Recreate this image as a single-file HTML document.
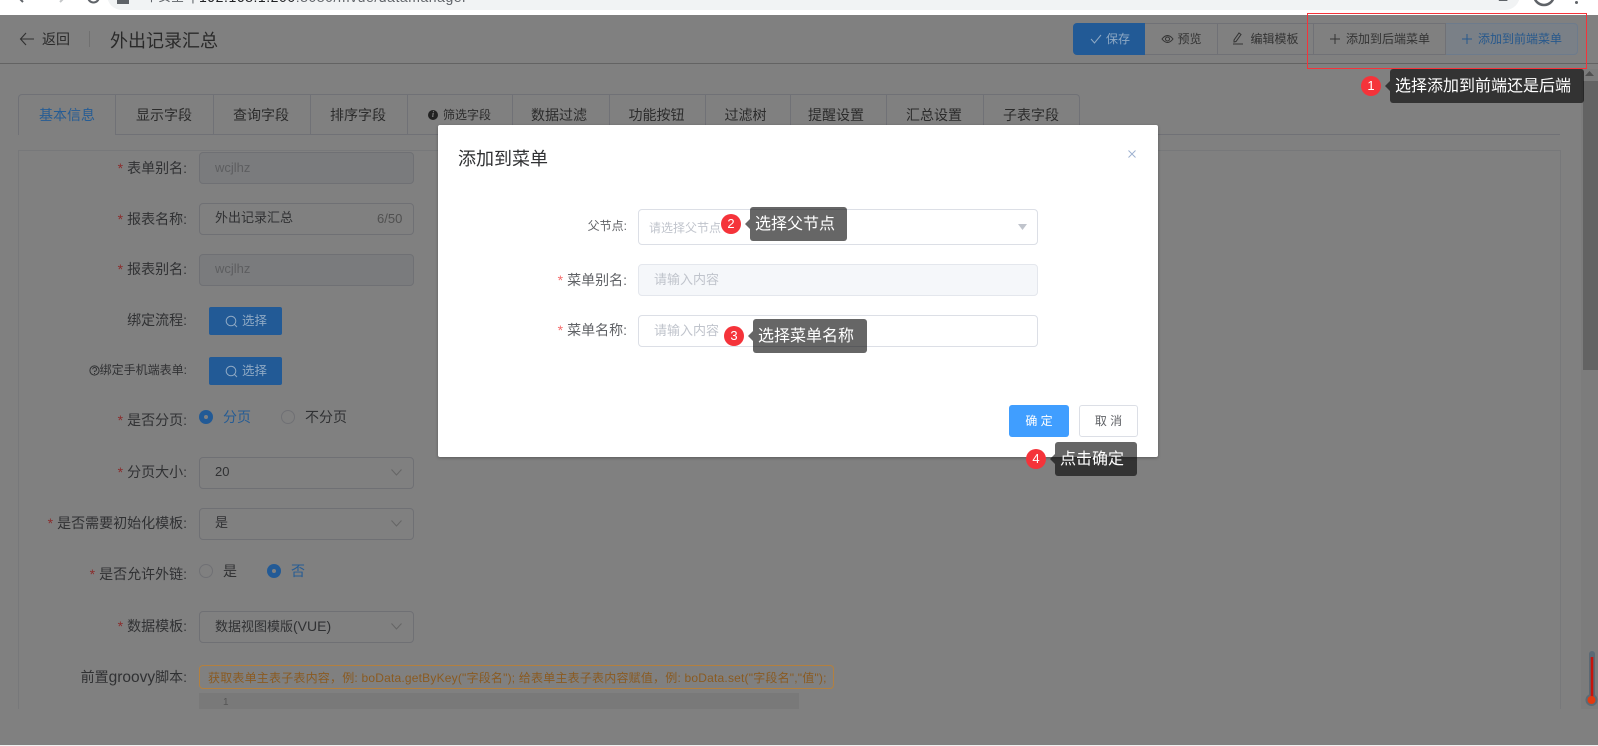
<!DOCTYPE html>
<html lang="zh-CN"><head><meta charset="utf-8"><title>添加到菜单</title>
<style>
html,body{margin:0;padding:0;background:#fff}
body{width:1598px;height:746px;position:relative;overflow:hidden;font-family:"Liberation Sans","Noto Sans CJK SC",sans-serif;font-size:14px;color:#303133}
div,span{box-sizing:border-box}
.a{position:absolute}
.t{position:absolute;white-space:nowrap;height:20px;line-height:20px}
.l{position:absolute;white-space:nowrap;right:1411px;height:20px;line-height:20px;color:#303133;font-size:14px}
.l i,.ml i{font-style:normal;color:#8a2c2c;margin-right:4px}
.b{position:absolute;border:1px solid #6f7074;border-radius:4px;left:199px;width:215px}
.dis{background:#7a7b7d}
.tab{position:absolute;top:94px;height:41px;border-right:1px solid #707176;line-height:43px;text-align:center;color:#2b2b2b;font-size:14px;white-space:nowrap}
.tb{position:absolute;top:23px;height:32px;border:1px solid #707176;border-left:0;line-height:30px;text-align:center;font-size:12px;color:#333;white-space:nowrap}
.tip{position:absolute;background:rgba(0,0,0,.6);border-radius:3px;color:#fff;font-size:16px;height:34px;line-height:36px;white-space:nowrap;padding-left:5px}
.tip:before{content:"";position:absolute;left:-5px;top:12px;border:5px solid transparent;border-left:0;border-right-color:rgba(0,0,0,.6)}
.dot{position:absolute;width:20px;height:20px;border-radius:50%;background:#f5333a;color:#fff;font-size:13px;line-height:20px;text-align:center}
.inp{position:absolute;left:638px;width:400px;border:1px solid #dcdfe6;border-radius:4px;background:#fff}
.ml{position:absolute;right:971px;white-space:nowrap;height:20px;line-height:20px;color:#606266;font-size:14px}
.ml i{color:#f56c6c}
.ph{position:absolute;white-space:nowrap;color:#c0c4cc;height:20px;line-height:20px}
.sel{position:absolute;left:199px;width:215px;height:32px;border:1px solid #6f7074;border-radius:4px}
.btn{position:absolute;left:209px;width:73px;height:28px;background:#225a96;border-radius:2px;color:#8fa9c4;font-size:14px;line-height:28px;padding-left:33px}
</style></head><body>

<!-- browser chrome -->
<div class="a" style="left:0;top:0;width:1598px;height:15px;background:#fff;overflow:hidden">
 <div class="a" style="left:107px;top:-20px;width:1413px;height:30px;background:#f1f3f4;border-radius:15px"></div>
 <svg class="a" style="left:10px;top:-6px" width="90" height="14" fill="none" stroke="#5f6368" stroke-width="2"><path d="M13 0 L9 4 L13 8"/><path d="M50 0 L54 4 L50 8" stroke="#c4c6c8"/><path d="M78 3 A5 5 0 0 0 89 3"/></svg>
 <div class="a" style="left:117px;top:0;width:12px;height:4px;background:#5f6368"></div>
 <div class="t" style="left:145px;top:-13px;font-size:13px;color:#5f6368">不安全 &nbsp;|</div>
 <div class="t" style="left:199px;top:-13px;font-size:14px;letter-spacing:.55px;color:#202124">192.168.1.200<span style="color:#5f6368">:8080/mvue/datamanager</span></div>
 <svg class="a" style="left:1496px;top:-4px" width="16" height="10"><path d="M1 0 L15 0 L11 5 L3 5Z" fill="#5f6368"/></svg>
 <svg class="a" style="left:1532px;top:-16px" width="24" height="24" fill="none" stroke="#5f6368" stroke-width="2.5"><circle cx="12" cy="11" r="10"/></svg>
 <div class="a" style="left:1575px;top:1px;width:3px;height:3px;background:#5f6368;border-radius:50%"></div>
</div>

<!-- dimmed page -->
<div class="a" style="left:0;top:15px;width:1598px;height:730px;background:#808080"></div>
<div class="a" style="left:0;top:745px;width:1598px;height:1px;background:#f0f0f0"></div>
<div class="a" style="left:0;top:63px;width:1598px;height:1px;background:#636363"></div>

<!-- page header -->
<svg class="a" style="left:19px;top:32px" width="16" height="14" fill="none" stroke="#303030" stroke-width="1.1"><path d="M7 1 L1.5 7 L7 13 M1.5 7 H15"/></svg>
<div class="t" style="left:42px;top:29px;font-size:14px;color:#2a2a2a">返回</div>
<div class="a" style="left:89px;top:31px;width:1px;height:16px;background:#707070"></div>
<div class="t" style="left:110px;top:31px;font-size:18px;color:#2a2a2a">外出记录汇总</div>

<!-- toolbar -->
<div class="a" style="left:1073px;top:23px;width:72px;height:32px;background:#225a96;border-radius:4px 0 0 4px;color:#8fa9c4;font-size:12px;line-height:32px;padding-left:33px">保存</div>
<svg class="a" style="left:1090px;top:34px" width="12" height="10" fill="none" stroke="#8fa9c4" stroke-width="1"><path d="M1 5 L4.5 9 L11 1"/></svg>
<div class="tb" style="left:1145px;width:73px;padding-left:17px">预览</div>
<svg class="a" style="left:1161px;top:34px" width="13" height="10" fill="none" stroke="#333" stroke-width="1"><path d="M1 5 Q6.5 -2 12 5 Q6.5 12 1 5Z"/><circle cx="6.5" cy="5" r="2"/></svg>
<div class="tb" style="left:1218px;width:96px;padding-left:18px">编辑模板</div>
<svg class="a" style="left:1232px;top:31px" width="12" height="14" fill="none" stroke="#333" stroke-width="1"><path d="M2 9 L7 2 L9 3.5 L4 10.5 L2 11Z M1 13 H11"/></svg>
<div class="tb" style="left:1314px;width:132px;padding-left:17px">添加到后端菜单</div>
<svg class="a" style="left:1330px;top:34px" width="10" height="10" stroke="#333" stroke-width="1"><path d="M5 0 V10 M0 5 H10"/></svg>
<div class="tb" style="left:1446px;width:132px;padding-left:17px;background:#7a8087;border-color:#6d7b8c;color:#27588c;border-radius:0 4px 4px 0">添加到前端菜单</div>
<svg class="a" style="left:1462px;top:34px" width="10" height="10" stroke="#27588c" stroke-width="1"><path d="M5 0 V10 M0 5 H10"/></svg>

<!-- tabs -->
<div class="a" style="left:18px;top:94px;width:1062px;height:41px;border:1px solid #707176;border-bottom:0;border-radius:4px 4px 0 0"></div>
<div class="a" style="left:115px;top:134px;width:1445px;height:1px;background:#707176"></div>
<div class="tab" style="left:19px;width:97px;color:#265c94">基本信息</div>
<div class="tab" style="left:116px;width:98px;padding-right:1px">显示字段</div>
<div class="tab" style="left:213px;width:98px;padding-right:1px">查询字段</div>
<div class="tab" style="left:310px;width:98px;padding-right:1px">排序字段</div>
<div class="tab" style="left:407px;width:106px;font-size:12px;padding-left:16px;padding-right:1px">筛选字段</div>
<div class="a" style="left:428px;top:110px;width:10px;height:10px;border-radius:50%;background:#222;color:#808080;font:italic bold 8px/10px 'Liberation Serif',serif;text-align:center">i</div>
<div class="tab" style="left:511px;width:99px;padding-right:2px">数据过滤</div>
<div class="tab" style="left:609px;width:97px;padding-right:1px">功能按钮</div>
<div class="tab" style="left:703px;width:88px;padding-right:2px">过滤树</div>
<div class="tab" style="left:788px;width:99px;padding-right:2px">提醒设置</div>
<div class="tab" style="left:886px;width:98px;padding-right:1px">汇总设置</div>
<div class="tab" style="left:983px;width:96px;border-right:0">子表字段</div>

<!-- form panel -->
<div class="a" style="left:18px;top:150px;width:1543px;height:559px;border:1px solid #77787a;border-bottom:0"></div>

<div class="l" style="top:158px"><i>*</i>表单别名:</div>
<div class="b dis" style="top:152px;height:32px"></div>
<div class="t" style="left:215px;top:158px;font-size:13px;color:#5d5e60">wcjlhz</div>

<div class="l" style="top:209px"><i>*</i>报表名称:</div>
<div class="b" style="top:203px;height:32px"></div>
<div class="t" style="left:215px;top:208px;font-size:13px;color:#303133">外出记录汇总</div>
<div class="t" style="left:377px;top:209px;font-size:13px;color:#505050">6/50</div>

<div class="l" style="top:259px"><i>*</i>报表别名:</div>
<div class="b dis" style="top:254px;height:32px"></div>
<div class="t" style="left:215px;top:259px;font-size:13px;color:#5d5e60">wcjlhz</div>

<div class="l" style="top:310px">绑定流程:</div>
<div class="btn" style="top:307px;font-size:12.5px">选择</div>
<svg class="a" style="left:225px;top:315px" width="13" height="13" fill="none" stroke="#8fa9c4" stroke-width="1"><circle cx="6" cy="6" r="4.8"/><path d="M9.5 9.5 L12 12"/></svg>

<div class="l" style="top:360px;font-size:12px">绑定手机端表单:</div>
<svg class="a" style="left:89px;top:365px" width="11" height="11" fill="none" stroke="#303133" stroke-width="1"><circle cx="5.5" cy="5.5" r="4.6"/><path d="M3.7 4.3 A1.9 1.9 0 1 1 5.5 6.3 V7"/><path d="M5.5 8 V9"/></svg>
<div class="btn" style="top:357px;font-size:12.5px">选择</div>
<svg class="a" style="left:225px;top:365px" width="13" height="13" fill="none" stroke="#8fa9c4" stroke-width="1"><circle cx="6" cy="6" r="4.8"/><path d="M9.5 9.5 L12 12"/></svg>

<div class="l" style="top:410px"><i>*</i>是否分页:</div>
<div class="a" style="left:199px;top:410px;width:14px;height:14px;border-radius:50%;background:#225a96"></div>
<div class="a" style="left:204px;top:415px;width:4px;height:4px;border-radius:50%;background:#808080"></div>
<div class="t" style="left:223px;top:407px;color:#265c94">分页</div>
<div class="a" style="left:281px;top:410px;width:14px;height:14px;border-radius:50%;border:1px solid #6f7074"></div>
<div class="t" style="left:305px;top:407px;color:#303133">不分页</div>

<div class="l" style="top:462px"><i>*</i>分页大小:</div>
<div class="sel" style="top:457px"></div>
<div class="t" style="left:215px;top:462px;font-size:13px">20</div>
<svg class="a" style="left:391px;top:469px" width="11" height="7" fill="none" stroke="#656565"><path d="M.5 .5 L5.5 6 L10.5 .5"/></svg>

<div class="l" style="top:513px"><i>*</i>是否需要初始化模板:</div>
<div class="sel" style="top:508px"></div>
<div class="t" style="left:215px;top:513px;font-size:13px">是</div>
<svg class="a" style="left:391px;top:520px" width="11" height="7" fill="none" stroke="#656565"><path d="M.5 .5 L5.5 6 L10.5 .5"/></svg>

<div class="l" style="top:564px"><i>*</i>是否允许外链:</div>
<div class="a" style="left:199px;top:564px;width:14px;height:14px;border-radius:50%;border:1px solid #6f7074"></div>
<div class="t" style="left:223px;top:561px">是</div>
<div class="a" style="left:267px;top:564px;width:14px;height:14px;border-radius:50%;background:#225a96"></div>
<div class="a" style="left:272px;top:569px;width:4px;height:4px;border-radius:50%;background:#808080"></div>
<div class="t" style="left:291px;top:561px;color:#265c94">否</div>

<div class="l" style="top:616px"><i>*</i>数据模板:</div>
<div class="sel" style="top:611px"></div>
<div class="t" style="left:215px;top:616px;font-size:13px">数据视图模版<span style="font-size:14px">(VUE)</span></div>
<svg class="a" style="left:391px;top:623px" width="11" height="7" fill="none" stroke="#656565"><path d="M.5 .5 L5.5 6 L10.5 .5"/></svg>

<div class="l" style="top:667px">前置<span style="font-size:15.5px">groovy</span>脚本:</div>
<div class="a" style="left:199px;top:665px;width:635px;height:24px;border:1px solid #b3803f;border-radius:4px"></div>
<div class="t" style="left:208px;top:668px;font-size:12px;letter-spacing:.2px;color:#8a5a20">获取表单主表子表内容，例: boData.getByKey("字段名"); 给表单主表子表内容赋值，例: boData.set("字段名","值");</div>
<div class="a" style="left:199px;top:693px;width:600px;height:16px;background:#797979"></div>
<div class="t" style="left:223px;top:693px;font-size:10px;color:#555;height:20px">1</div>

<!-- scrollbar -->
<div class="a" style="left:1581px;top:69px;width:17px;height:640px;background:#7c7c7c"></div>
<svg class="a" style="left:1585px;top:71px" width="9" height="6"><path d="M0 5 L4.5 0 L9 5Z" fill="#505050"/></svg>
<div class="a" style="left:1583px;top:81px;width:15px;height:289px;background:#636363"></div>
<svg class="a" style="left:1584px;top:649px" width="14" height="60"><rect x="5" y="2" width="6" height="50" rx="3" fill="#5b6a75"/><circle cx="7.5" cy="51" r="6" fill="#5b6a75"/><rect x="6.7" y="8" width="2.6" height="40" fill="#c8140c"/><circle cx="7.5" cy="51" r="4" fill="#e23a10"/></svg>

<!-- red annotation -->
<div class="a" style="left:1307px;top:13px;width:280px;height:56px;border:1px solid #f5333a"></div>
<div class="tip" style="left:1390px;top:69px;width:194px">选择添加到前端还是后端</div>
<div class="dot" style="left:1361px;top:76px">1</div>

<!-- dialog -->
<div class="a" style="left:438px;top:125px;width:720px;height:332px;background:#fff;border-radius:2px;box-shadow:0 1px 3px rgba(0,0,0,.3)"></div>
<div class="t" style="left:458px;top:149px;font-size:18px;color:#303133">添加到菜单</div>
<svg class="a" style="left:1128px;top:150px" width="8" height="8" stroke="#9fb2d0" stroke-width="1"><path d="M.5 .5 L7.5 7.5 M7.5 .5 L.5 7.5"/></svg>

<div class="ml" style="top:216px;font-size:12px">父节点:</div>
<div class="inp" style="top:209px;height:36px"></div>
<div class="ph" style="left:649px;top:218px;font-size:12px">请选择父节点</div>
<svg class="a" style="left:1018px;top:224px" width="9" height="6"><path d="M0 0 H9 L4.5 6Z" fill="#c0c4cc"/></svg>

<div class="ml" style="top:270px"><i>*</i>菜单别名:</div>
<div class="inp" style="top:264px;height:32px;background:#f5f7fa;border-color:#e4e7ed"></div>
<div class="ph" style="left:654px;top:270px;font-size:13px">请输入内容</div>

<div class="ml" style="top:320px"><i>*</i>菜单名称:</div>
<div class="inp" style="top:315px;height:32px"></div>
<div class="ph" style="left:654px;top:321px;font-size:13px">请输入内容</div>

<div class="a" style="left:1009px;top:405px;width:60px;height:32px;background:#409eff;border-radius:3px;color:#fff;font-size:12px;line-height:32px;text-align:center">确 定</div>
<div class="a" style="left:1079px;top:405px;width:59px;height:32px;background:#fff;border:1px solid #dcdfe6;border-radius:3px;color:#606266;font-size:12px;line-height:30px;text-align:center">取 消</div>

<!-- dialog annotations -->
<div class="tip" style="left:750px;top:207px;width:97px">选择父节点</div>
<div class="dot" style="left:721px;top:214px">2</div>
<div class="tip" style="left:753px;top:319px;width:114px">选择菜单名称</div>
<div class="dot" style="left:724px;top:326px">3</div>
<div class="tip" style="left:1055px;top:442px;width:82px">点击确定</div>
<div class="dot" style="left:1026px;top:449px">4</div>
</body></html>
